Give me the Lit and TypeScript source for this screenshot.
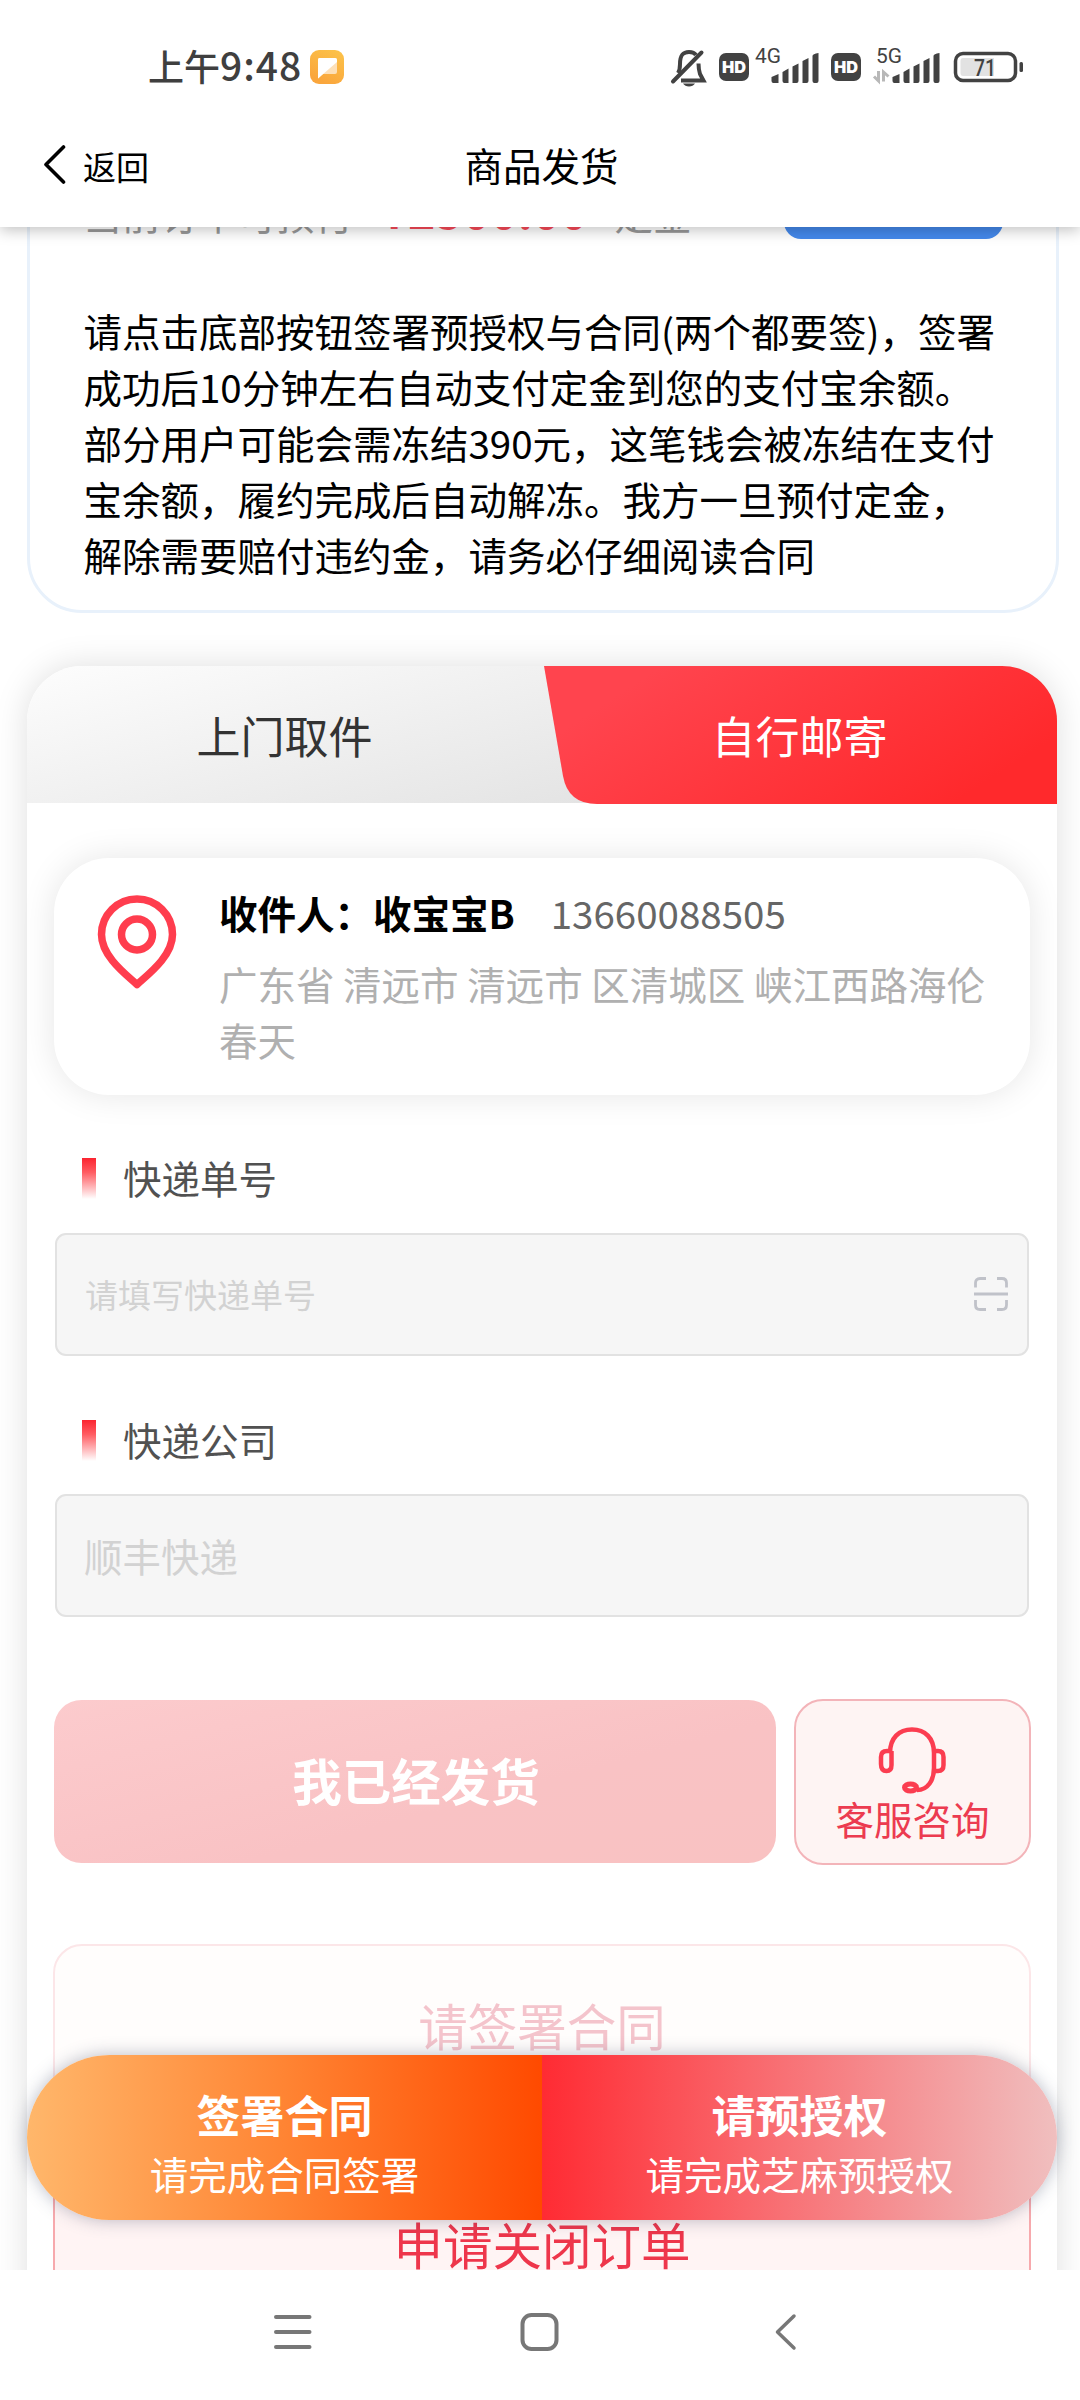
import { LitElement, html, css, svg } from "lit";
import { customElement } from "lit/decorators.js";

const signal = () => svg`
  <path d="M0 24 L7 21 V30 H2 Q0 30 0 28Z M11 19 L17 15.5 V30 H13 Q11 30 11 28Z M21 13.5 L27 10.5 V28 Q27 30 25 30 H21Z M31 8 L37 5 V28 Q37 30 35 30 H31Z M41 3 Q41 1 47 0 V28 Q47 30 45 30 H43 Q41 30 41 28Z" fill="#424242"/>`;

@customElement("status-bar")
export class StatusBar extends LitElement {
  static styles = css`
    :host { display: flex; height: 134px; box-sizing: border-box; padding: 0 56px 0 148px; align-items: center; color: #3f3f3f; }
    .time { font-size: 36px; line-height: 52px; font-weight: 500; white-space: nowrap; width: 162px; margin-bottom: 5px; }
    .num { font-size: 39px; letter-spacing: 1px; }
    .app { width: 34px; height: 34px; display: block; }
    .icons { width: 360px; height: 50px; display: block; margin-left: auto; }
    text { font-family: Roboto, "Noto Sans", sans-serif; fill: #424242; }
    .hd { font: 900 16px Inter, Roboto, sans-serif; fill: #fff; }
  `;
  render() {
    return html`
      <span class="time">上午<span class="num">9:48</span></span>
      <svg class="app" viewBox="0 0 34 34">
        <defs>
          <linearGradient id="a" x1="1" y1="0" x2="0.5" y2="1"><stop offset="0" stop-color="#fcc44a"/><stop offset="1" stop-color="#faa63c"/></linearGradient>
        </defs>
        <rect width="34" height="34" rx="9" fill="url(#a)"/>
        <path d="M9.5 8 H25 Q27 8 27 10 V22 Q27 24 25 24 H13 L8 28.500 V9.500 Q8 8 9.500 8Z" fill="#fde0b8"/>
        <path d="M9.500 8 H25 Q27 8 27 10 V12 L8 28.500 V9.500 Q8 8 9.500 8Z" fill="#fff"/>
      </svg>
      <svg class="icons" viewBox="664 42 360 50">
        <g fill="none" stroke="#424242" stroke-width="4">
          <path d="M678 73 Q680 70 680 64 C680 54 684 52 689 52 Q694 52 696 55" />
          <path d="M681 80.500 H703.500 L700 74 Q698.500 69 698.500 63.500"/>
          <path d="M673 81.500 L701.500 52.500" stroke-linecap="round"/>
        </g>
        <path d="M683 83.500 H695 Q693 86.500 689 86.500 Q685 86.500 683 83.500Z" fill="#424242"/>
        <rect x="719" y="53" width="30" height="28" rx="7" fill="#424242"/>
        <text class="hd" x="722" y="73" textLength="24" lengthAdjust="spacingAndGlyphs">HD</text>
        <text x="755" y="62.500" font-size="20.500" textLength="26" lengthAdjust="spacingAndGlyphs">4G</text>
        <g transform="translate(771.500 53)">${signal()}</g>
        <rect x="831" y="53" width="30" height="28" rx="7" fill="#424242"/>
        <text class="hd" x="834" y="73" textLength="24" lengthAdjust="spacingAndGlyphs">HD</text>
        <text x="876" y="62.500" font-size="20.500" textLength="26" lengthAdjust="spacingAndGlyphs">5G</text>
        <path d="M878.500 71 V81 L874 76.500 M883.500 81.500 V72 L888.500 76.500" fill="none" stroke="#b8b8b8" stroke-width="3"/>
        <g transform="translate(892.500 53)">${signal()}</g>
        <rect x="955.500" y="53.500" width="60" height="27" rx="7.500" fill="#fff" stroke="#424242" stroke-width="3.500"/>
        <path d="M963 58 H994 V76 H963 Q960.500 76 960.500 73 V61 Q960.500 58 963 58Z" fill="#e2e2e2"/>
        <rect x="1019.500" y="62" width="3.500" height="10" rx="1.500" fill="#424242"/>
        <text x="974" y="75.500" font-size="23.500" font-weight="500" textLength="22" lengthAdjust="spacingAndGlyphs">71</text>
      </svg>`;
  }
}

@customElement("title-bar")
export class TitleBar extends LitElement {
  static styles = css`
    :host { display: grid; grid-template-columns: 1fr auto 1fr; height: 93px; box-sizing: border-box; padding: 0 39px 27px 42px; align-items: center; color: #000; }
    .back { display: flex; align-items: center; gap: 17px; font-size: 33px; line-height: 48px; }
    .back svg { width: 24px; height: 40px; margin-top: -6px; }
    .back span { margin-bottom: 3px; }
    .title { font-size: 38.5px; line-height: 56px; margin-bottom: 6px; }
  `;
  render() {
    return html`
      <div class="back">
        <svg viewBox="0 0 24 40"><path d="M21.500 3 L4 20.500 L21.500 38" fill="none" stroke="#000" stroke-width="3.600" stroke-linecap="round" stroke-linejoin="round"/></svg>
        <span>返回</span>
      </div>
      <div class="title">商品发货</div>`;
  }
}

@customElement("form-field")
export class FormField extends LitElement {
  static properties = {
    label: {},
    hint: {},
    scan: { type: Boolean },
  };
  declare label: string;
  declare hint: string;
  declare scan: boolean;
  static styles = css`
    :host { display: block; }
    .head { display: flex; height: 74.500px; padding-left: 28px; align-items: flex-start; }
    .mark { width: 13.500px; height: 41px; background: linear-gradient(#fb2430, #ff5c62 35%, #fff); margin-right: 27.500px; }
    .label { font-size: 38.500px; line-height: 38px; color: #515151; }
    .box { display: flex; align-items: center; justify-content: space-between; box-sizing: border-box; height: 123px; border: 2px solid #e2e2e2; border-radius: 11px; background: #f6f6f6; padding: 0 18px 0 27px; color: #d2d2d2; font-size: 38.500px; margin: 0 1px; }
    .small { font-size: 33px; padding-left: 28px; }
    .box span { margin-bottom: 1px; }
    svg { width: 36px; height: 36px; }
  `;
  render() {
    return html`
      <div class="head"><i class="mark"></i><span class="label">${this.label}</span></div>
      <div class="box ${this.scan ? "small" : ""}">
        <span>${this.hint}</span>
        ${this.scan
          ? html`<svg viewBox="0 0 36 36" fill="none" stroke="#c0c2c9" stroke-width="2.800">
              <path d="M2.500 11.500 V7 Q2.500 2.500 7 2.500 H13 M24 2.500 H29 Q33.500 2.500 33.500 7 V11.500 M2.500 24 V29 Q2.500 33.500 7 33.500 H13 M24 33.500 H29 Q33.500 33.500 33.500 29 V24"/>
              <path d="M1 18 H35" stroke-width="3.200"/></svg>`
          : ""}
      </div>`;
  }
}

@customElement("app-root")
export class AppRoot extends LitElement {
  static styles = css`
    :host { display: block; position: relative; width: 1080px; height: 2400px; overflow: hidden; background: #fff; font-family: "Noto Sans CJK SC", sans-serif; }
    .top { position: relative; z-index: 2; height: 227px; background: #fff; box-shadow: 0 3px 14px rgba(0, 0, 0, 0.25); }
    .view { height: 2043px; overflow: hidden; display: flex; flex-direction: column; align-items: center; }
    .notice { flex: none; box-sizing: border-box; width: 1032px; height: 458px; margin-top: -72px; margin-left: 5px; border: 3px solid #e8f1fb; border-radius: 55px; padding: 0 53px 0 54px; }
    .pay { display: flex; height: 81px; align-items: flex-end; font-size: 38.500px; line-height: 56px; color: #999; white-space: nowrap; }
    .pay .lbl { margin-bottom: -2px; width: 297px; }
    .price { color: #fb4a58; font-weight: 700; font-size: 46.500px; width: 234px; margin-bottom: 2px; }
    .pay .unit { margin-bottom: -2px; }
    .pay .btn { width: 219px; height: 74px; border-radius: 17px; background: #4489ec; margin-left: auto; }
    .text { margin: 63px 0 0; font-size: 38.500px; line-height: 56px; color: #000; }
    .card { flex: none; box-sizing: border-box; width: 1030px; height: 1700px; margin-top: 53px; margin-left: 4px; border-radius: 55px; background: #fff; box-shadow: 0 0 34px rgba(0, 0, 0, 0.13); padding: 0 27px; }
    .tabs { display: grid; grid-template-columns: 1fr 1fr; margin: 0 -27px; height: 137px; border-radius: 55px 55px 0 0; background: linear-gradient(165deg, #fdfdfd, #e3e3e3 72%); position: relative; }
    .tabs svg { position: absolute; left: 516px; top: 0; width: 514px; height: 138px; }
    .tab { position: relative; z-index: 1; text-align: center; font-size: 44px; line-height: 138px; color: #333; }
    .on { color: #fff; }
    .addr { box-sizing: border-box; display: flex; height: 237px; margin-top: 55px; border-radius: 55px; background: #fff; box-shadow: 0 0 34px rgba(0, 0, 0, 0.1); padding: 26px 38px 0 41px; font-size: 38.500px; line-height: 56px; }
    .pin { width: 84px; height: 98px; flex: none; margin: 9px 40px 0 0; }
    .who { display: flex; gap: 36px; color: #666; }
    .who b { color: #000; }
    .where { color: #b0b0b0; margin-top: 14.500px; }
    .f1 { margin-top: 63px; }
    .f2 { margin-top: 64px; }
    .acts { display: flex; gap: 18px; margin-top: 81.500px; align-items: center; }
    .send { flex: none; width: 722px; height: 163px; border-radius: 27.500px; background: linear-gradient(165deg, #fccbcd, #f9c2c4 60%, #f9c2c2); color: #fff; font-weight: 700; font-size: 49.500px; line-height: 159px; text-align: center; text-indent: 2px; }
    .help { flex: none; box-sizing: border-box; width: 237px; height: 166px; border: 2px solid #f3b4b9; border-radius: 29px; background: #fef4f3; color: #ec3b50; font-size: 38.500px; line-height: 56px; display: flex; flex-direction: column; align-items: center; }
    .help svg { width: 68px; height: 68px; margin: 25px 2px 0 0; }
    .help span { margin-top: -4px; }
    .ghost { box-sizing: border-box; height: 166px; margin: 79.500px -1px 0; border: 2px solid #fce6e8; border-radius: 29px; background: #fffdfc; color: #f4c4cc; font-size: 49.500px; line-height: 158px; text-align: center; }
    .close { margin-top: 53px; border-color: #f7a9ad; background: #fff4f4; color: #ee364b; line-height: 157px; }
    .bar { position: absolute; z-index: 3; left: 27px; top: 2055px; width: 1030px; height: 165px; border-radius: 82.500px; overflow: hidden; display: grid; grid-template-columns: 1fr 1fr; color: #fff; text-align: center; }
    .halo { position: absolute; z-index: 2; left: 27px; top: 2055px; width: 1030px; height: 165px; border-radius: 82.500px; box-shadow: 0 0 17px rgba(50, 60, 90, 0.34); }
    .half { padding-top: 27px; }
    .left { background: linear-gradient(90deg, #ffb76b, #ff8433 50%, #ff4a00); }
    .right { background: linear-gradient(90deg, #ff2b33, #f0bfbf); }
    .half b { display: block; font-size: 44px; line-height: 64px; }
    .half span { display: block; font-size: 38.500px; line-height: 56px; margin-top: -1px; }
    .nav { position: relative; z-index: 4; height: 130px; background: #fff; display: flex; align-items: center; justify-content: center; gap: 204px; box-sizing: border-box; padding-bottom: 6px; }
    .nav svg { width: 42px; height: 42px; fill: none; stroke: #777; stroke-width: 4; }
  `;
  render() {
    return html`
      <header class="top"><status-bar></status-bar><title-bar></title-bar></header>
      <main class="view">
        <section class="notice">
          <div class="pay"><span class="lbl">当前订单可预付</span><span class="price">¥2500.00</span><span class="unit">定金</span><i class="btn"></i></div>
          <p class="text">请点击底部按钮签署预授权与合同(两个都要签)，签署成功后10分钟左右自动支付定金到您的支付宝余额。部分用户可能会需冻结390元，这笔钱会被冻结在支付宝余额，履约完成后自动解冻。我方一旦预付定金，解除需要赔付违约金，请务必仔细阅读合同</p>
        </section>
        <section class="card">
          <div class="tabs">
            <svg viewBox="0 0 514 138">
              <defs><linearGradient id="r" gradientUnits="userSpaceOnUse" x1="180" y1="-40" x2="330" y2="190"><stop offset="0" stop-color="#ff444e"/><stop offset="1" stop-color="#ff292c"/></linearGradient></defs>
              <path d="M1 0 H459 A55 55 0 0 1 514 55 V138 H54 Q25 138 20 110Z" fill="url(#r)"/>
            </svg>
            <div class="tab">上门取件</div>
            <div class="tab on">自行邮寄</div>
          </div>
          <div class="addr">
            <svg class="pin" viewBox="0 0 84 98" fill="none" stroke="#ff3d4e" stroke-width="7.500">
              <path d="M42 91.500 C33 83 6.500 64 6.500 41.500 A35.500 35.500 0 0 1 77.500 41.500 C77.500 64 51 83 42 91.500Z" stroke-linejoin="round"/>
              <circle cx="42" cy="41.500" r="15.500"/>
            </svg>
            <div>
              <div class="who"><b>收件人：收宝宝B</b><span>13660088505</span></div>
              <div class="where">广东省 清远市 清远市 区清城区 峡江西路海伦春天</div>
            </div>
          </div>
          <form-field class="f1" label="快递单号" hint="请填写快递单号" scan></form-field>
          <form-field class="f2" label="快递公司" hint="顺丰快递"></form-field>
          <div class="acts">
            <div class="send">我已经发货</div>
            <div class="help">
              <svg viewBox="0 0 68 68" fill="none" stroke="#fb3d50" stroke-width="4.500">
                <path d="M12 27 C12 12 21 3.500 34 3.500 S56 12 56 27 V42 C56 54 50 64 39 64"/>
                <path d="M12 25 H9 Q3 25 3 31 V38 Q3 45 8.500 45 Q13.500 45 13.500 39 V25 M56 25 H60 Q65.500 25 65.500 31 V39 Q65.500 45 60 45 H56"/>
                <ellipse cx="32.500" cy="61.500" rx="6" ry="3.500" stroke-width="5"/>
              </svg>
              <span>客服咨询</span>
            </div>
          </div>
          <div class="ghost">请签署合同</div>
          <div class="ghost close">申请关闭订单</div>
        </section>
      </main>
      <div class="halo"></div>
      <div class="bar">
        <div class="half left"><b>签署合同</b><span>请完成合同签署</span></div>
        <div class="half right"><b>请预授权</b><span>请完成芝麻预授权</span></div>
      </div>
      <nav class="nav">
        <svg viewBox="0 0 42 42"><path d="M3 6 H36.500 M3 21 H36.500 M3 36 H36.500" stroke-linecap="round"/></svg>
        <svg viewBox="0 0 42 42"><rect x="3.500" y="4" width="34" height="34" rx="9"/></svg>
        <svg viewBox="0 0 42 42"><path d="M29 5 L12.500 21 L29 37" stroke-linecap="round" stroke-linejoin="round" stroke-width="3.500"/></svg>
      </nav>`;
  }
}
